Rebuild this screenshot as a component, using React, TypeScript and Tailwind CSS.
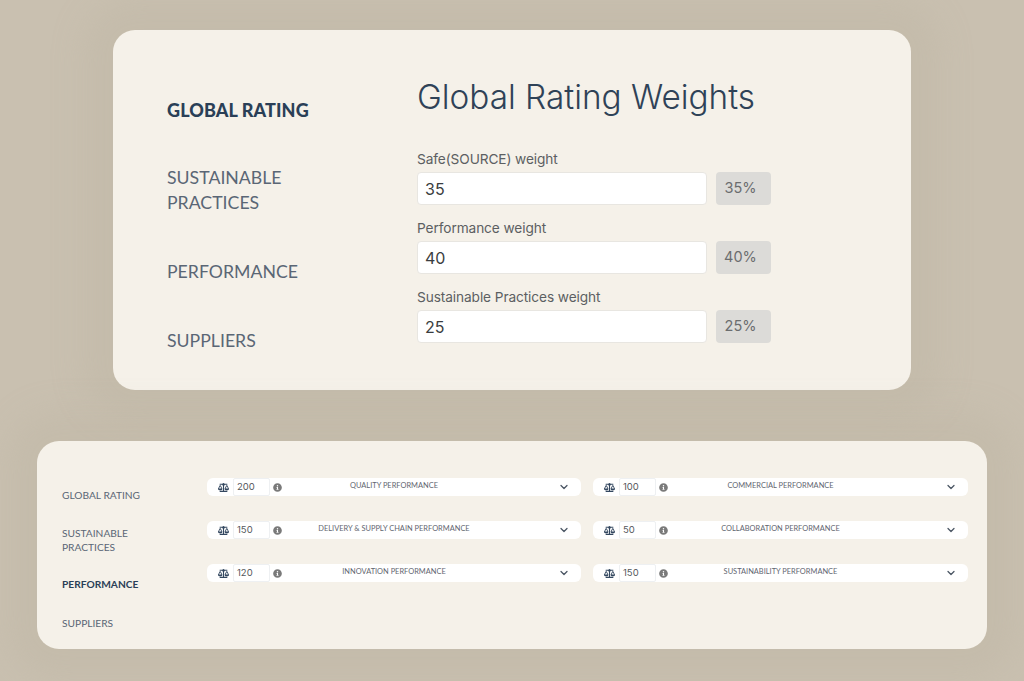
import { ChevronDown } from "lucide-react";
import { FaBalanceScale, FaInfoCircle } from "react-icons/fa";

const rows = [
  ["200", "QUALITY PERFORMANCE", "100", "COMMERCIAL PERFORMANCE"],
  ["150", "DELIVERY & SUPPLY CHAIN PERFORMANCE", "50", "COLLABORATION PERFORMANCE"],
  ["120", "INNOVATION PERFORMANCE", "150", "SUSTAINABILITY PERFORMANCE"],
];

const weights = [
  ["Safe(SOURCE) weight", "35", "35%"],
  ["Performance weight", "40", "40%"],
  ["Sustainable Practices weight", "25", "25%"],
];

function Weight({ label, value, pct }: { label: string; value: string; pct: string }) {
  return (
    <div className="flex flex-col">
      <div className="h-[23px] text-[13.7px] leading-[20px] text-[#5c5f62] font-['Inter',sans-serif] tracking-[-0.1px]">{label}</div>
      <div className="flex gap-[9px]">
        <div className="flex h-[33px] w-[290px] items-center rounded-[4px] border border-[#e8e6e1] bg-white pl-[7px] text-[16px] text-[#3a3d40] font-['Inter',sans-serif]">{value}</div>
        <div className="flex h-[33px] w-[55px] items-center justify-center rounded-[4px] bg-[#dcdbd8] pr-[6px] pb-[2px] text-[14.5px] text-[#6b6d6f] font-['Inter',sans-serif]">{pct}</div>
      </div>
    </div>
  );
}

function Row({ value, label }: { value: string; label: string }) {
  return (
    <div className="grid h-[18px] grid-cols-[1fr_auto_1fr] items-center rounded-[6px] bg-white">
      <div className="flex items-center">
        <FaBalanceScale className="ml-[11px] text-[#33475f]" size={11} />
        <div className="ml-[4px] flex h-[18px] w-[37px] items-center rounded-[2px] border border-[#eef0f2] bg-white pl-[3px] text-[9.5px] text-[#55585c] font-['Inter',sans-serif]">{value}</div>
        <FaInfoCircle className="ml-[3px] text-[#7a7a7a]" size={9} />
      </div>
      <div className="-mt-[3px] text-center text-[7.45px] text-[#5f6670] font-['Lato',sans-serif]">{label}</div>
      <div className="flex justify-end pr-[11px]">
        <ChevronDown className="text-[#4a5563]" size={12} strokeWidth={2.5} />
      </div>
    </div>
  );
}

export default function App() {
  return (
    <div className="flex h-[681px] w-[1024px] flex-col items-center overflow-hidden bg-[#c9c0b0] pt-[30px]">
      <section className="flex h-[360px] w-[798px] rounded-[22px] bg-[#f5f1e9] pl-[54px] shadow-[0_0_30px_30px_rgba(190,180,162,0.35)]">
        <nav className="w-[250px] pt-[68px] font-['Lato',sans-serif] text-[17.7px] leading-[25px] text-[#5a6675]">
          <div className="text-[18px] font-black tracking-[0.1px] text-[#2a3f57]">GLOBAL RATING</div>
          <div className="mt-[42px]">SUSTAINABLE<br />PRACTICES</div>
          <div className="mt-[44px]">PERFORMANCE</div>
          <div className="mt-[44px]">SUPPLIERS</div>
        </nav>
        <div className="pt-[43px]">
          <h1 className="mb-[28px] h-[48px] text-[33.3px] leading-[48px] text-[#2f4257] font-['Inter',sans-serif] font-light">Global Rating Weights</h1>
          <div className="flex flex-col gap-[13px]">
            {weights.map(([l, v, p]) => (
              <Weight key={l} label={l} value={v} pct={p} />
            ))}
          </div>
        </div>
      </section>
      <section className="mt-[51px] flex h-[208px] w-[950px] rounded-[22px] bg-[#f5f1e9] pl-[25px] shadow-[0_0_30px_30px_rgba(190,180,162,0.35)]">
        <nav className="w-[145px] pt-[47px] font-['Lato',sans-serif] text-[10.2px] leading-[14px] text-[#5a6675]">
          <div>GLOBAL RATING</div>
          <div className="mt-[24px]">SUSTAINABLE<br />PRACTICES</div>
          <div className="mt-[23px] font-bold text-[#2a3f57]">PERFORMANCE</div>
          <div className="mt-[25px]">SUPPLIERS</div>
        </nav>
        <div className="grid grid-cols-[374px_375px] content-start gap-x-[12px] gap-y-[25px] pt-[37px]">
          {rows.flatMap(([a, b, c, d]) => [
            <Row key={b} value={a} label={b} />,
            <Row key={d} value={c} label={d} />,
          ])}
        </div>
      </section>
    </div>
  );
}
